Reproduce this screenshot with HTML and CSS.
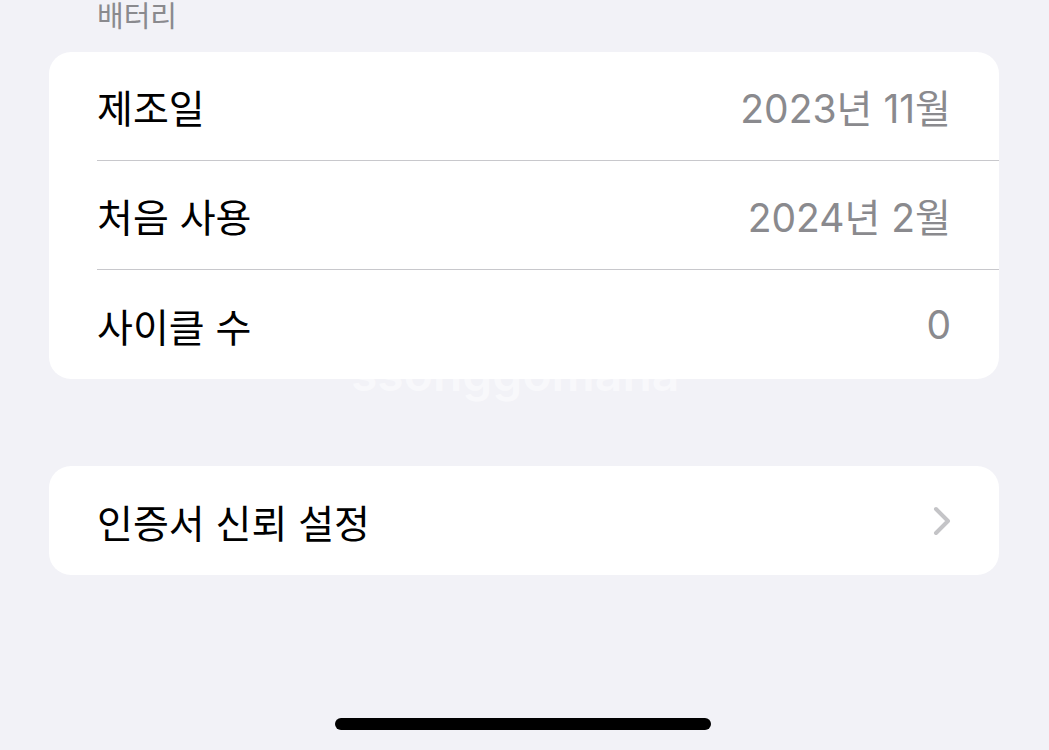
FILE: index.html
```html
<!DOCTYPE html>
<html lang="ko">
<head>
    <meta charset="UTF-8">
    <meta name="viewport" content="width=device-width, initial-scale=1.0">
    <title>배터리</title>
    <link rel="stylesheet" href="styles.css">
</head>
<body>
    <div class="page">
        <div class="section-title">배터리</div>

        <div class="group">
            <div class="row">
                <span class="label">제조일</span>
                <span class="value">2023년 11월</span>
            </div>
            <div class="row">
                <span class="label">처음 사용</span>
                <span class="value">2024년 2월</span>
            </div>
            <div class="row last">
                <span class="label">사이클 수</span>
                <span class="value">0</span>
            </div>
            <div class="watermark">ssonggomana</div>
        </div>

        <div class="group second">
            <div class="row last">
                <span class="label">인증서 신뢰 설정</span>
                <svg class="chevron" width="18" height="30" viewBox="0 0 18 30">
                    <path d="M3 3 L15 15 L3 27" fill="none" stroke="#c4c4c7" stroke-width="4" stroke-linecap="round" stroke-linejoin="round"/>
                </svg>
            </div>
        </div>

        <div class="home-bar"></div>
    </div>
</body>
</html>
```

FILE: styles.css
```css
body {
    font-family: 'Noto Sans CJK KR', 'Noto Sans', sans-serif;
    background-color: #f2f2f7;
    margin: 0;
    padding: 0;
    height: 750px;
    overflow: hidden;
}

.page {
    padding: 0 50px 0 49px;
}

.section-title {
    height: 52px;
    padding-left: 48px;
    font-size: 29px;
    line-height: 29px;
    color: #8a8a8e;
    box-sizing: border-box;
    padding-top: 0;
}

.group {
    position: relative;
    background-color: #ffffff;
    border-radius: 22px;
    padding-left: 48px;
}

.group.second {
    margin-top: 87px;
}

.row {
    height: 108px;
    display: flex;
    align-items: center;
    justify-content: space-between;
    padding-right: 50px;
    border-bottom: 1px solid #c8c8cc;
}

.row.last {
    height: 109px;
    border-bottom: none;
}

.label {
    font-size: 39px;
    color: #000;
}

.value {
    font-family: 'Inter', 'Noto Sans CJK KR', sans-serif;
    font-size: 39px;
    color: #8a8a8e;
    margin-right: -2px;
}

.chevron {
    margin-right: -2px;
}

.watermark {
    position: absolute;
    left: 302px;
    top: 292px;
    font-family: 'Inter', sans-serif;
    font-size: 48px;
    font-weight: 600;
    color: rgba(255, 255, 255, 0.5);
    pointer-events: none;
}

.home-bar {
    width: 376px;
    height: 12px;
    background-color: #000;
    border-radius: 6px;
    margin: 143px auto 0;
    position: relative;
    left: -1px;
}
```
